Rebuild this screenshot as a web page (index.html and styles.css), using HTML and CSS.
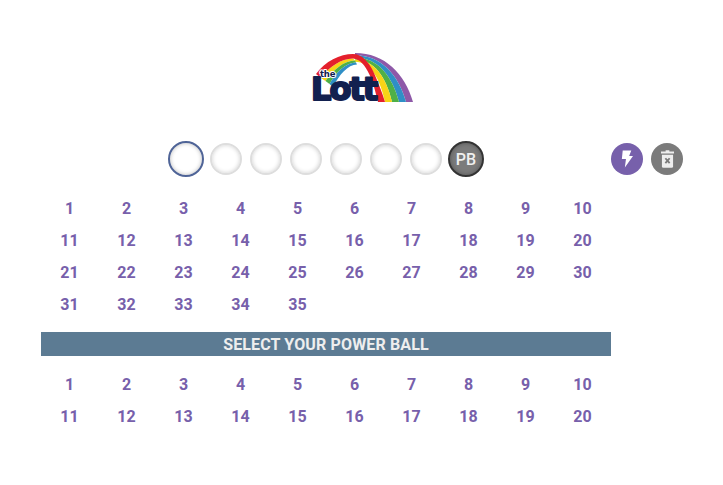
FILE: index.html
```html
<!DOCTYPE html>
<html>
<head>
  <title>The Lott Power Ball</title>
  <link rel="stylesheet" href="styles.css">
</head>
<body>
  <div class="logo">
    <svg width="110" height="64" viewBox="0 0 110 64">
      <!-- right half of the rainbow -->
      <path d="M48 3 C78 3 98 24 106 52 L99 52 C91.8 25.2 74.4 5.2 48 5.2Z" fill="#8e59a8"/>
      <path d="M48 5.2 C74.4 5.2 91.8 25.2 99 52 L92 52 C85.6 26.4 70.8 7.4 48 7.4Z" fill="#2f8fc6"/>
      <path d="M48 7.4 C70.8 7.4 85.6 26.4 92 52 L85 52 C79.4 27.6 67.2 9.6 48 9.6Z" fill="#4fb047"/>
      <path d="M48 9.6 C67.2 9.6 79.4 27.6 85 52 L78 52 C73.2 28.8 63.6 11.8 48 11.8Z" fill="#f7d417"/>
      <!-- left half, red runs across the top to the inner right foot -->
      <path d="M14 28 C22 17 34 8.5 46 8.5 L48 10.5 C37 10.5 26 20 18.5 31Z" fill="#f7d417"/>
      <path d="M18.5 31 C26 20 37 10.5 48 10.5 L49 12.5 C39 12.5 29 22 22.5 34Z" fill="#4fb047"/>
      <path d="M22.5 34 C29 22 39 12.5 49 12.5 L50 14.5 C41 14.5 32 25 26 37Z" fill="#2f8fc6"/>
      <path d="M9 24 C18 11 33 4 46 4 C55 4 62 12 67 23 C71 32 75 42 78 52 L71 52 C68 40 66 32 62.5 24.75 C58 15 53 9 46 8.5 C34 8.5 22 17 14 28Z" fill="#e4202c"/>
      <text class="logo-the" x="13" y="27">the</text>
      <text class="logo-lott" x="4" y="50">Lott</text>
    </svg>
  </div>

  <div class="picks">
    <div class="balls">
      <div class="ball active"></div>
      <div class="ball"></div>
      <div class="ball"></div>
      <div class="ball"></div>
      <div class="ball"></div>
      <div class="ball"></div>
      <div class="ball"></div>
      <div class="ball pb">PB</div>
    </div>
    <div class="actions">
      <div class="action quick">
        <svg width="12" height="18" viewBox="0 0 14 20">
          <path d="M2 0 H12 L9.5 6.5 H14 L4.5 20 L5.8 10 H1Z" fill="#fff"/>
        </svg>
      </div>
      <div class="action clear">
        <svg width="13" height="18" viewBox="0 0 14 19">
          <path d="M5 0 H9 V1.5 H14 V3.5 H0 V1.5 H5Z" fill="#eee"/>
          <path d="M1 5 H13 V17.5 Q13 19 11.5 19 H2.5 Q1 19 1 17.5Z" fill="#eee"/>
          <path d="M4.7 8.7 L9.3 14 M9.3 8.7 L4.7 14" stroke="#7b7b7b" stroke-width="2"/>
        </svg>
      </div>
    </div>
  </div>

  <div class="numbers">
    <span>1</span><span>2</span><span>3</span><span>4</span><span>5</span><span>6</span><span>7</span><span>8</span><span>9</span><span>10</span>
    <span>11</span><span>12</span><span>13</span><span>14</span><span>15</span><span>16</span><span>17</span><span>18</span><span>19</span><span>20</span>
    <span>21</span><span>22</span><span>23</span><span>24</span><span>25</span><span>26</span><span>27</span><span>28</span><span>29</span><span>30</span>
    <span>31</span><span>32</span><span>33</span><span>34</span><span>35</span>
  </div>

  <div class="banner">SELECT YOUR POWER BALL</div>

  <div class="numbers">
    <span>1</span><span>2</span><span>3</span><span>4</span><span>5</span><span>6</span><span>7</span><span>8</span><span>9</span><span>10</span>
    <span>11</span><span>12</span><span>13</span><span>14</span><span>15</span><span>16</span><span>17</span><span>18</span><span>19</span><span>20</span>
  </div>
</body>
</html>
```

FILE: styles.css
```css
body {
  margin: 0;
  font-family: Roboto, sans-serif;
  background: #fff;
}

.logo {
  display: flex;
  justify-content: center;
  padding-top: 50px;
  height: 56px;
}

.logo-the {
  font-family: "DejaVu Sans", sans-serif;
  font-weight: 700;
  font-size: 8.5px;
  letter-spacing: -0.2px;
  fill: #12204f;
  stroke: #fff;
  stroke-width: 2px;
  stroke-linejoin: round;
  paint-order: stroke;
}

.logo-lott {
  font-family: "DejaVu Sans", sans-serif;
  font-weight: 700;
  font-size: 32px;
  letter-spacing: -2px;
  fill: #12204f;
  stroke: #12204f;
  stroke-width: 2px;
  stroke-linejoin: round;
}

.picks {
  display: flex;
  margin: 35px 0 15px 41px;
}

.balls {
  display: flex;
  align-items: center;
  justify-content: center;
  gap: 8px;
  width: 570px;
  height: 36px;
}

.ball {
  box-sizing: border-box;
  width: 32px;
  height: 32px;
  border: 2px solid #ddd;
  border-radius: 50%;
  background: #fff;
  box-shadow: inset 0 0 4px #d0d0d0;
}

.ball.active {
  width: 36px;
  height: 36px;
  margin-right: -2px;
  border-color: #4f6497;
  box-shadow: inset 0 0 4px #bbb;
}

.ball.pb {
  display: flex;
  align-items: center;
  justify-content: center;
  width: 36px;
  height: 36px;
  margin-left: -2px;
  border-color: #333;
  background: #7b7b7b;
  box-shadow: inset 0 0 4px #555;
  color: #f0f0f0;
  font-size: 16px;
  font-weight: 500;
}

.actions {
  display: flex;
  align-items: center;
  gap: 8px;
}

.action {
  display: flex;
  align-items: center;
  justify-content: center;
  width: 32px;
  height: 32px;
  border-radius: 50%;
}

.quick {
  background: #7760ab;
}

.clear {
  background: #7b7b7b;
}

.numbers {
  display: grid;
  grid-template-columns: repeat(10, 57px);
  grid-auto-rows: 32px;
  margin-left: 41px;
  width: 570px;
}

.numbers span {
  display: flex;
  align-items: center;
  justify-content: center;
  color: #7760ab;
  font-size: 16px;
  font-weight: 700;
}

.banner {
  margin: 12px 0 12px 41px;
  width: 570px;
  height: 24px;
  line-height: 25px;
  background: #5c7b93;
  color: #eee;
  font-size: 16px;
  font-weight: 700;
  letter-spacing: 0.14px;
  text-align: center;
}
```
